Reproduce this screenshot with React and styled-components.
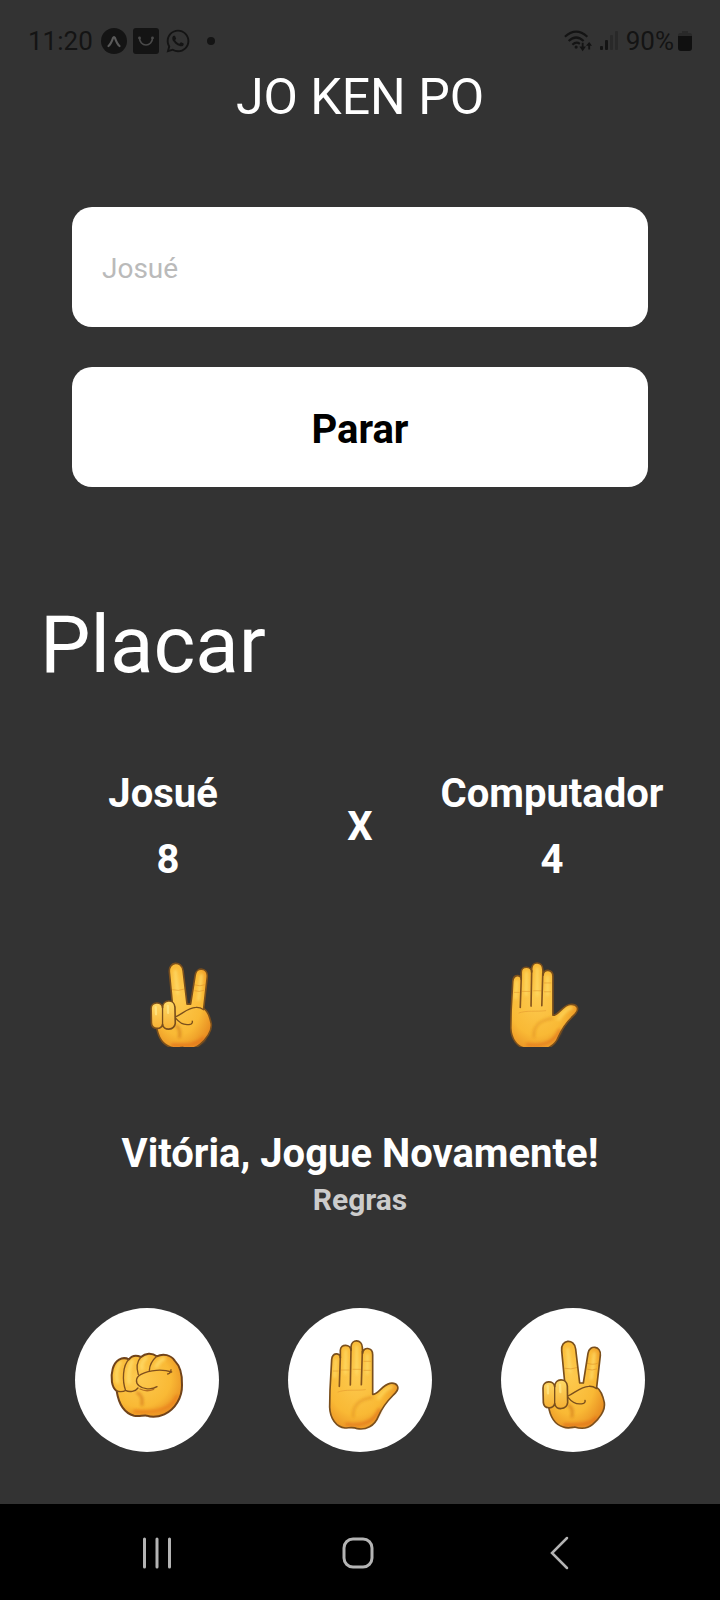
import React, { useState } from "react";
import styled, { createGlobalStyle } from "styled-components";
import { FaWhatsapp } from "react-icons/fa";

const GlobalStyle = createGlobalStyle`
  *, *::before, *::after { box-sizing: border-box; }
  body {
    margin: 0;
    background: #333333;
    font-family: Roboto, "Liberation Sans", sans-serif;
  }
  h1, h2, p { margin: 0; }
  button, input { font-family: inherit; border: 0; margin: 0; padding: 0; }
`;

const Screen = styled.div`
  display: flex;
  flex-direction: column;
  min-height: 100vh;
  color: #ffffff;
`;

const StatusBar = styled.header`
  display: flex;
  align-items: center;
  justify-content: space-between;
  padding: 25px 28px 10px;
  color: #141414;
  font-size: 26px;
  line-height: 32px;
`;

const StatusGroup = styled.div`
  display: flex;
  align-items: center;
  gap: ${(p) => p.$gap}px;

  svg { display: block; flex: none; }
`;

const Main = styled.main`
  display: flex;
  flex-direction: column;
  flex: 1;
`;

const Title = styled.h1`
  font-size: 50px;
  font-weight: 400;
  line-height: 60px;
  text-align: center;
`;

const Form = styled.form`
  display: flex;
  flex-direction: column;
  gap: 40px;
  width: 80%;
  margin: 80px auto 110px;
`;

const NameInput = styled.input`
  width: 100%;
  height: 120px;
  padding: 2px 30px 0;
  border-radius: 20px;
  background: #ffffff;
  color: #000000;
  font-size: 28px;
  outline: none;

  &::placeholder { color: #bababa; opacity: 1; }
`;

const StopButton = styled.button`
  height: 120px;
  padding-top: 6px;
  border-radius: 20px;
  background: #ffffff;
  color: #000000;
  font-size: 40px;
  font-weight: 700;
  line-height: 48px;
`;

const Heading = styled.h2`
  padding: 0 40px;
  font-size: 80px;
  font-weight: 400;
  line-height: 96px;
`;

const Scoreboard = styled.section`
  display: grid;
  grid-template-columns: 7fr 1fr 7fr;
  align-items: center;
  margin-top: 77px;
  font-size: 40px;
  font-weight: 700;
  line-height: 48px;
  text-align: center;
`;

const Player = styled.div`
  display: flex;
  flex-direction: column;
  gap: 18px;
  white-space: pre;
`;

const Plays = styled.section`
  display: grid;
  grid-template-columns: 1fr 1fr;
  justify-items: center;
  margin-top: 76px;

  svg { display: block; }
`;

const Result = styled.p`
  margin-top: 83px;
  font-size: 40px;
  font-weight: 700;
  line-height: 48px;
  text-align: center;
`;

const RulesButton = styled.button`
  align-self: center;
  margin-top: 4px;
  background: none;
  color: #cccccc;
  font-size: 30px;
  font-weight: 700;
  line-height: 36px;
`;

const Choices = styled.div`
  display: flex;
  justify-content: space-between;
  margin-top: 90px;
  padding: 0 75px 52px;
`;

const ChoiceButton = styled.button`
  width: 144px;
  height: 144px;
  border-radius: 50%;
  background: #ffffff;

  svg { display: block; }
`;

const NavBar = styled.nav`
  display: grid;
  grid-template-columns: repeat(3, 1fr);
  height: 96px;
  padding: 2px 60px 0 56px;
  background: #000000;
`;

const NavButton = styled.button`
  display: flex;
  align-items: center;
  justify-content: center;
  background: none;
  color: #b4b4b4;
`;

const OUTLINE = "#7a4f1c";

function SkinGradients({ id }) {
  return (
    <defs>
      <radialGradient id={`${id}-skin`} cx="0.4" cy="0.4" r="0.68">
        <stop offset="0" stopColor="#fdca4f" />
        <stop offset="0.65" stopColor="#f9b935" />
        <stop offset="1" stopColor="#e88e22" />
      </radialGradient>
      <linearGradient id={`${id}-finger`} x1="0" y1="0" x2="0" y2="1">
        <stop offset="0" stopColor="#ffd966" />
        <stop offset="1" stopColor="#f6b033" />
      </linearGradient>
      <filter id={`${id}-soft`} x="-30%" y="-30%" width="160%" height="160%">
        <feGaussianBlur stdDeviation="5" />
      </filter>
    </defs>
  );
}

function Peace({ id }) {
  const shape =
    "M254 276 L245 182 C241 147 283 144 287 177 L299 279 L310 279 L324 190 C328 163 364 167 361 196 L350 292 C362 300 369 318 373 338 C377 362 356 388 338 403 C322 417 300 416 284 411 C272 413 264 416 250 411 C225 404 210 382 205 345 L235 290 Z";
  return (
    <g strokeLinecap="round" strokeLinejoin="round" fill="none">
      <path d={shape} fill={`url(#${id}-skin)`} />
      <g filter={`url(#${id}-soft)`} opacity="0.75">
        <path d="M348 385 C325 408 290 405 255 405" stroke="#e2741a" strokeWidth="12" />
        <path d="M263 178 L270 245 M343 190 L334 265" stroke="#ffe173" strokeWidth="9" />
        <path d="M266 346 C280 353 278 368 276 380" stroke="#c96f14" strokeWidth="7" />
      </g>
      <path d="M255 235 Q273 240 290 233 M322 220 Q340 226 352 220 M323 238 Q336 243 350 237" stroke="#e0952b" strokeWidth="2" />
      <path d={shape} stroke={OUTLINE} strokeWidth="5" />
      <path d="M189 294 C188 270 222 270 224 290 C225 263 260 263 262 288 L263 338 C260 360 227 362 224 341 C220 358 192 358 190 338 Z" fill={`url(#${id}-finger)`} stroke={OUTLINE} strokeWidth="5" />
      <path d="M224 288 L224 342" stroke={OUTLINE} strokeWidth="4" />
      <path d="M203 288 L204 310 M240 284 L241 306" stroke="#ffe88c" strokeWidth="7" opacity="0.7" />
      <path d="M264 318 C286 308 302 290 326 289 C336 288 344 292 350 296 M264 322 C276 337 294 345 311 340 Q317 337 315 331" stroke={OUTLINE} strokeWidth="4" />
    </g>
  );
}

function Palm({ id }) {
  const shape =
    "M180 300 L185 209 C187 187 210 187 211 203 L211 181 C212 160 242 162 243 181 L243 171 C244 146 276 147 277 172 L278 190 C279 169 308 171 308 194 L308 313 C323 315 337 284 360 280 C381 277 391 292 377 308 C362 324 343 338 325 379 C314 408 287 421 262 416 C249 410 238 414 225 414 C199 412 180 385 179 352 Z";
  return (
    <g strokeLinecap="round" strokeLinejoin="round" fill="none">
      <path d={shape} fill={`url(#${id}-skin)`} />
      <g filter={`url(#${id}-soft)`} opacity="0.75">
        <path d="M328 360 C310 400 270 408 230 403" stroke="#e2761a" strokeWidth="10" />
        <path d="M197 210 L194 260 M227 182 L226 250 M260 170 L260 250 M292 195 L292 250" stroke="#ffe36f" strokeWidth="8" />
        <path d="M306 322 C265 328 247 350 250 380" stroke="#d98219" strokeWidth="5" />
        <path d="M325 325 Q342 298 365 290" stroke="#ffdf68" strokeWidth="8" />
      </g>
      <path d="M190 243 H205 M214 240 H237 M249 238 H272 M282 214 H302 M282 241 H301 M204 306 C227 297 257 303 286 299" stroke="#e59d31" strokeWidth="2" />
      <path d="M211 201 L208 289 M243 176 L241 285 M277 184 L274 284" stroke="#85541c" strokeWidth="5" />
      <path d={shape} stroke={OUTLINE} strokeWidth="5" />
    </g>
  );
}

function Fist({ id }) {
  const shape =
    "M170 303 C155 293 151 262 158 237 C165 210 186 198 207 208 C216 196 230 195 243 201 C256 189 276 187 290 199 C310 189 333 195 344 212 C362 230 367 260 366 285 C367 322 345 359 313 373 C292 382 271 381 260 377 C247 376 236 380 222 377 C192 369 176 341 170 303 Z";
  return (
    <g strokeLinecap="round" strokeLinejoin="round" fill="none">
      <path d={shape} fill={`url(#${id}-skin)`} />
      <g filter={`url(#${id}-soft)`} opacity="0.75">
        <path d="M180 218 Q164 245 172 276 M216 213 Q202 247 207 278 M258 203 Q240 222 246 235 M312 205 Q296 214 289 229" stroke="#ffe070" strokeWidth="11" />
        <path d="M350 320 C333 358 284 370 225 364" stroke="#ea7e1a" strokeWidth="11" />
        <path d="M232 308 C250 318 246 331 246 345" stroke="#cc6c14" strokeWidth="7" />
      </g>
      <path d={shape} stroke="#70431a" strokeWidth="6" />
      <path d="M207 208 C188 226 186 272 197 302 M243 201 C230 215 229 235 235 254 M290 199 C277 211 269 226 268 241 M170 303 Q186 308 197 301 C208 308 227 304 234 294" stroke="#80501c" strokeWidth="4" />
      <path d="M335 246 C308 237 270 239 243 253 C226 262 226 278 237 287 C248 297 274 301 291 290 M323 252 Q333 249 333 239" stroke="#80501c" strokeWidth="4" />
      <path d="M240 297 Q260 307 281 298" stroke="#b87020" strokeWidth="4" />
    </g>
  );
}

const HANDS = {
  pedra: { Glyph: Fist, left: 45, label: "Pedra" },
  papel: { Glyph: Palm, left: 54, label: "Papel" },
  tesoura: { Glyph: Peace, left: 63, label: "Tesoura" },
};

function ChoiceHand({ kind }) {
  const { Glyph, left } = HANDS[kind];
  const id = `choice-${kind}`;
  return (
    <svg width="144" height="144" viewBox={`${left} 54 432 432`} aria-hidden="true">
      <SkinGradients id={id} />
      <Glyph id={id} />
    </svg>
  );
}

function PlayedHand({ kind }) {
  const { Glyph, left, label } = HANDS[kind];
  const id = `played-${kind}`;
  return (
    <svg width="141" height="87" viewBox={`${left} 144 432 266`} role="img" aria-label={label}>
      <SkinGradients id={id} />
      <Glyph id={id} />
    </svg>
  );
}

function ExpoIcon() {
  return (
    <svg width="26" height="26" viewBox="0 0 26 26" aria-hidden="true">
      <circle cx="13" cy="13" r="13" fill="currentColor" />
      <path d="M7.5 18 Q10 16 12 10 Q13 8 14 10 Q16 16 18.500 18" fill="none" stroke="#5a5a5a" strokeWidth="2.2" strokeLinecap="round" />
    </svg>
  );
}

function StoreIcon() {
  return (
    <svg width="26" height="26" viewBox="0 0 26 26" aria-hidden="true">
      <rect width="26" height="26" rx="3" fill="currentColor" />
      <path d="M6.500 10 A6.500 7 0 0 0 19.500 10" fill="none" stroke="#4a4a4a" strokeWidth="1.600" strokeLinecap="round" />
      <circle cx="6.500" cy="10" r="1.400" fill="#4a4a4a" />
      <circle cx="19.500" cy="10" r="1.400" fill="#4a4a4a" />
    </svg>
  );
}

function WifiIcon() {
  return (
    <svg width="28" height="24" viewBox="0 0 30 24" fill="none" stroke="currentColor" strokeWidth="2.300" aria-hidden="true">
      <path d="M1 7.500 Q13 -3.500 25 7.500 M5 12 Q13 4.500 21 12 M9 16 Q13 12 17 15" />
      <circle cx="13" cy="18.500" r="1.700" fill="currentColor" stroke="none" />
      <path d="M20 14 V20 M27 21 V15" strokeWidth="2" />
      <path d="M16.500 18 H23.500 L20 23 Z M23.500 17 H30 L27 13 Z" fill="currentColor" stroke="none" />
    </svg>
  );
}

function SignalIcon() {
  return (
    <svg width="18" height="20" viewBox="0 0 18 20" fill="currentColor" aria-hidden="true">
      <rect x="0" y="15" width="3" height="4" rx="1" />
      <rect x="5" y="9" width="3" height="10" rx="1" />
      <rect x="10" y="4" width="3" height="15" rx="1" opacity="0.3" />
      <rect x="15" y="0" width="3" height="19" rx="1" opacity="0.3" />
    </svg>
  );
}

function BatteryIcon() {
  return (
    <svg width="14" height="22" viewBox="0 0 14 22" aria-hidden="true">
      <path d="M4 1 H10 V3 H12 Q14 3 14 6 H0 Q0 3 2 3 H4 Z" fill="#292929" />
      <path d="M0 6 H14 V18 Q14 21 11 21 H3 Q0 21 0 18 Z" fill="#101010" />
    </svg>
  );
}

export default function App() {
  const [name, setName] = useState("");

  return (
    <>
      <GlobalStyle />
      <Screen>
        <StatusBar>
          <StatusGroup $gap={8}>
            <span>11:20</span>
            <StatusGroup $gap={6}>
              <ExpoIcon />
              <StoreIcon />
              <FaWhatsapp size={26} aria-hidden="true" />
              <svg width="26" height="8" viewBox="0 0 26 8" aria-hidden="true">
                <circle cx="14" cy="4" r="4" fill="currentColor" />
              </svg>
            </StatusGroup>
          </StatusGroup>
          <StatusGroup $gap={8}>
            <WifiIcon />
            <SignalIcon />
            <StatusGroup $gap={4}>
              <span>90%</span>
              <BatteryIcon />
            </StatusGroup>
          </StatusGroup>
        </StatusBar>

        <Main>
          <Title>JO KEN PO</Title>

          <Form onSubmit={(e) => e.preventDefault()}>
            <NameInput
              type="text"
              aria-label="Nome"
              placeholder="Josué"
              value={name}
              onChange={(e) => setName(e.target.value)}
            />
            <StopButton type="submit">Parar</StopButton>
          </Form>

          <Heading>Placar</Heading>

          <Scoreboard>
            <Player>
              <span>{"Josué "}</span>
              <span>8</span>
            </Player>
            <span>X</span>
            <Player>
              <span>Computador</span>
              <span>4</span>
            </Player>
          </Scoreboard>

          <Plays>
            <PlayedHand kind="tesoura" />
            <PlayedHand kind="papel" />
          </Plays>

          <Result>Vitória, Jogue Novamente!</Result>
          <RulesButton type="button">Regras</RulesButton>

          <Choices>
            {Object.entries(HANDS).map(([kind, { label }]) => (
              <ChoiceButton key={kind} type="button" aria-label={label}>
                <ChoiceHand kind={kind} />
              </ChoiceButton>
            ))}
          </Choices>
        </Main>

        <NavBar>
          <NavButton type="button" aria-label="Recentes">
            <svg width="30" height="32" viewBox="0 0 30 32" aria-hidden="true">
              <path d="M2.500 2 V30 M15 2 V30 M27.500 2 V30" stroke="currentColor" strokeWidth="3" strokeLinecap="round" />
            </svg>
          </NavButton>
          <NavButton type="button" aria-label="Início">
            <svg width="32" height="32" viewBox="0 0 32 32" fill="none" aria-hidden="true">
              <rect x="2" y="2" width="28" height="28" rx="9" stroke="currentColor" strokeWidth="3" />
            </svg>
          </NavButton>
          <NavButton type="button" aria-label="Voltar">
            <svg width="20" height="34" viewBox="0 0 20 34" fill="none" aria-hidden="true">
              <path d="M18 2 L3 17 L18 32" stroke="currentColor" strokeWidth="2.500" strokeLinecap="round" />
            </svg>
          </NavButton>
        </NavBar>
      </Screen>
    </>
  );
}
